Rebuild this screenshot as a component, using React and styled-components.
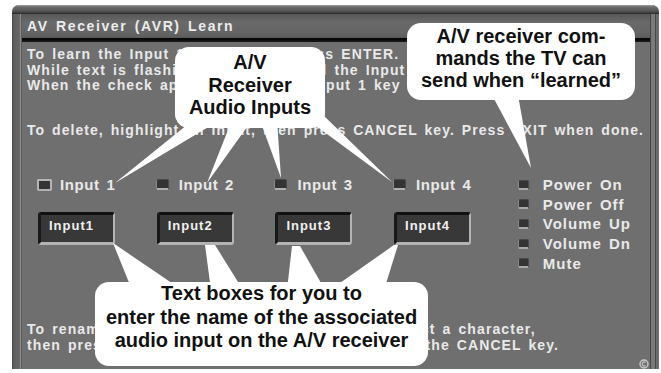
import { createGlobalStyle, styled } from 'styled-components';

const GlobalStyle = createGlobalStyle`
  html, body {
    margin: 0;
    padding: 0;
    background: #fff;
  }
  body {
    width: 661px;
    height: 373px;
    overflow: hidden;
    font-family: "Liberation Sans", Arial, Helvetica, sans-serif;
  }
`;

const inputs = ['Input 1', 'Input 2', 'Input 3', 'Input 4'];
const commands = ['Power On', 'Power Off', 'Volume Up', 'Volume Dn', 'Mute'];

function App() {
    return (
        <Page>
            <GlobalStyle />
            <Screen>
                <TopBevel />
                <Frame>
                    <LeftRail />
                    <Center>
                        <TitleBar>AV Receiver (AVR) Learn</TitleBar>
                        <Divider />
                        <Body>
                            <Lines>
                                <div>To learn the Input 1 key of AVR, press ENTER.</div>
                                <div>While text is flashing, press and hold the Input 1 key.</div>
                                <div>When the check appears there, the Input 1 key is learned.</div>
                            </Lines>
                            <DeleteLine>
                                To delete, highlight an input, then press CANCEL key. Press EXIT when done.
                            </DeleteLine>
                            <Controls>
                                <InputGrid>
                                    {inputs.map((label, i) => (
                                        <InputColumn key={label}>
                                            <CheckRow>
                                                <Check $active={i === 0} />
                                                <span>{label}</span>
                                            </CheckRow>
                                            <TextBox>{label.replace(' ', '')}</TextBox>
                                        </InputColumn>
                                    ))}
                                </InputGrid>
                                <CommandList>
                                    {commands.map((c) => (
                                        <CommandRow key={c}>
                                            <SmallCheck />
                                            <span>{c}</span>
                                        </CommandRow>
                                    ))}
                                </CommandList>
                            </Controls>
                            <BottomRow>
                                <Lines $lh={16}>
                                    <div>To rename an input, press ▲ or ▼ button to select a character,</div>
                                    <div>then press ENTER. To erase any character, press the CANCEL key.</div>
                                </Lines>
                                <CornerIcon width="10" height="10" viewBox="0 0 10 10">
                                    <circle cx="5" cy="5" r="4" fill="none" stroke="#c8c8c8" strokeWidth="1.4" />
                                    <path d="M6.5 3.4 A2 2 0 1 0 6.5 6.6" fill="none" stroke="#c8c8c8" strokeWidth="1.2" />
                                </CornerIcon>
                            </BottomRow>
                        </Body>
                    </Center>
                    <RightRail />
                </Frame>
            </Screen>

            <Pointers width="661" height="373" viewBox="0 0 661 373">
                <polygon points="193,120 220,120 115,183" />
                <polygon points="232,120 252,120 207,183" />
                <polygon points="260,120 277,120 281,178" />
                <polygon points="308,120 322,114 392,182" />
                <polygon points="492,95 518,95 531,168" />
                <polygon points="113,243 182,290 132,290" />
                <polygon points="205,245 215,245 243,290 211,290" />
                <polygon points="292,246 300,246 325,290 287,290" />
                <polygon points="394,245 398,245 384,290 330,290" />
            </Pointers>

            <Callout $x={175} $y={47} $w={150} $h={81} $pad={4} $lh={22.5}>
                A/V
                <br />
                Receiver
                <br />
                Audio Inputs
            </Callout>
            <Callout $x={407} $y={23} $w={228} $h={77} $pad={2} $lh={22}>
                A/V receiver com-
                <br />
                mands the TV can
                <br />
                send when “learned”
            </Callout>
            <Callout $x={95} $y={282} $w={333} $h={84} $pad={0} $lh={23.5}>
                Text boxes for you to
                <br />
                enter the name of the associated
                <br />
                audio input on the A/V receiver
            </Callout>
        </Page>
    );
}

export default App;

const Page = styled.div`
    position: relative;
    width: 661px;
    height: 373px;
    padding: 5px 2px 0 12px;
    box-sizing: border-box;
`;

const Screen = styled.div`
    width: 647px;
    height: 364px;
    display: flex;
    flex-direction: column;
    background: #6f6f6f;
    border-radius: 7px 7px 0 0;
    overflow: hidden;
`;

const TopBevel = styled.div`
    flex: none;
    height: 8px;
    background: linear-gradient(#a0a0a0 0, #6c6c6c 2px, #555 6px, #3c3c3c 100%);
    border-bottom: 1px solid #2e2e2e;
`;

const Frame = styled.div`
    flex: 1;
    display: flex;
    min-height: 0;
`;

const LeftRail = styled.div`
    flex: none;
    width: 10px;
    background: linear-gradient(
        to right,
        #4a4a4a 0,
        #5f5f5f 2px,
        #676767 8px,
        #8e8e8e 8px,
        #8e8e8e 9px,
        #5a5a5a 9px
    );
`;

const RightRail = styled.div`
    flex: none;
    width: 9px;
    background: linear-gradient(
        to right,
        #444 0,
        #444 1px,
        #7a7a7a 1px,
        #7a7a7a 5px,
        #484848 5px,
        #484848 6px,
        #6c6c6c 6px
    );
`;

const Center = styled.div`
    flex: 1;
    min-width: 0;
    display: flex;
    flex-direction: column;
`;

const TitleBar = styled.div`
    flex: none;
    height: 24px;
    padding-left: 5px;
    display: flex;
    align-items: center;
    background: linear-gradient(#575757, #6a6a6a 35%, #646464 80%, #5a5a5a);
    color: #ececec;
    font-size: 14px;
    font-weight: bold;
    letter-spacing: 1.6px;
    word-spacing: 2px;
`;

const Divider = styled.div`
    flex: none;
    height: 4px;
    background: linear-gradient(#000, #1c1c1c);
`;

const Body = styled.div`
    flex: 1;
    display: flex;
    flex-direction: column;
    padding: 5px 0 0 5px;
    color: #e9e9e9;
    font-size: 14px;
    font-weight: bold;
    letter-spacing: 1.1px;
    word-spacing: 2px;
    white-space: nowrap;
`;

const Lines = styled.div`
    line-height: ${(p) => p.$lh || 15.5}px;
`;

const DeleteLine = styled.div`
    margin-top: 29px;
    line-height: 15.5px;
    letter-spacing: 1.05px;
    word-spacing: 2px;
`;

const Controls = styled.div`
    display: flex;
    margin-top: 37px;
    padding-left: 10px;
`;

const InputGrid = styled.div`
    display: grid;
    grid-template-columns: repeat(4, 118.7px);
`;

const InputColumn = styled.div`
    display: flex;
    flex-direction: column;
`;

const CheckRow = styled.div`
    display: flex;
    align-items: center;
    gap: 8px;
    height: 19.6px;
    font-size: 15px;
    letter-spacing: 0.6px;
`;

const Check = styled.div`
    flex: none;
    box-sizing: border-box;
    width: ${(p) => (p.$active ? 15 : 13)}px;
    height: ${(p) => (p.$active ? 12 : 11)}px;
    margin-right: ${(p) => (p.$active ? 0 : 2)}px;
    background: #343434;
    border-radius: 2px;
    border: ${(p) => (p.$active ? '2px solid #b4b4b4' : '1px solid #4a4a4a')};
    border-bottom: 2px solid #b0b0b0;
    border-left-color: ${(p) => (p.$active ? '#b4b4b4' : '#8a8a8a')};
`;

const TextBox = styled.div`
    box-sizing: border-box;
    width: 77px;
    height: 33px;
    margin: 17px 0 0 1px;
    padding: 3px 0 0 8px;
    background: #383838;
    border-top: 3px solid #111;
    border-left: 3px solid #181818;
    border-right: 2px solid #b4b4b4;
    border-bottom: 3px solid #b4b4b4;
    border-radius: 3px;
    color: #f0f0f0;
    font-size: 13px;
    line-height: 16px;
    letter-spacing: 1px;
`;

const CommandList = styled.div`
    margin-left: 6px;
    display: flex;
    flex-direction: column;
`;

const CommandRow = styled.div`
    display: flex;
    align-items: center;
    gap: 14px;
    height: 19.6px;
    font-size: 15px;
    letter-spacing: 1px;
`;

const SmallCheck = styled.div`
    flex: none;
    box-sizing: border-box;
    width: 11px;
    height: 10px;
    background: #343434;
    border-radius: 2px;
    border: 1px solid #4a4a4a;
    border-bottom: 2px solid #aaaaaa;
    border-left-color: #888;
`;

const BottomRow = styled.div`
    display: flex;
    align-items: flex-end;
    justify-content: space-between;
    margin-top: 48px;
    padding-right: 1px;
`;

const CornerIcon = styled.svg`
    flex: none;
    margin-bottom: -16px;
`;

const Pointers = styled.svg`
    position: absolute;
    top: 0;
    left: 0;
    pointer-events: none;
    polygon {
        fill: #fff;
    }
`;

const Callout = styled.div`
    position: absolute;
    left: ${(p) => p.$x}px;
    top: ${(p) => p.$y}px;
    width: ${(p) => p.$w}px;
    height: ${(p) => p.$h}px;
    padding-top: ${(p) => p.$pad}px;
    box-sizing: border-box;
    background: #fff;
    border-radius: 14px;
    color: #111;
    font-size: 20px;
    font-weight: bold;
    line-height: ${(p) => p.$lh}px;
    text-align: center;
    white-space: nowrap;
`;
